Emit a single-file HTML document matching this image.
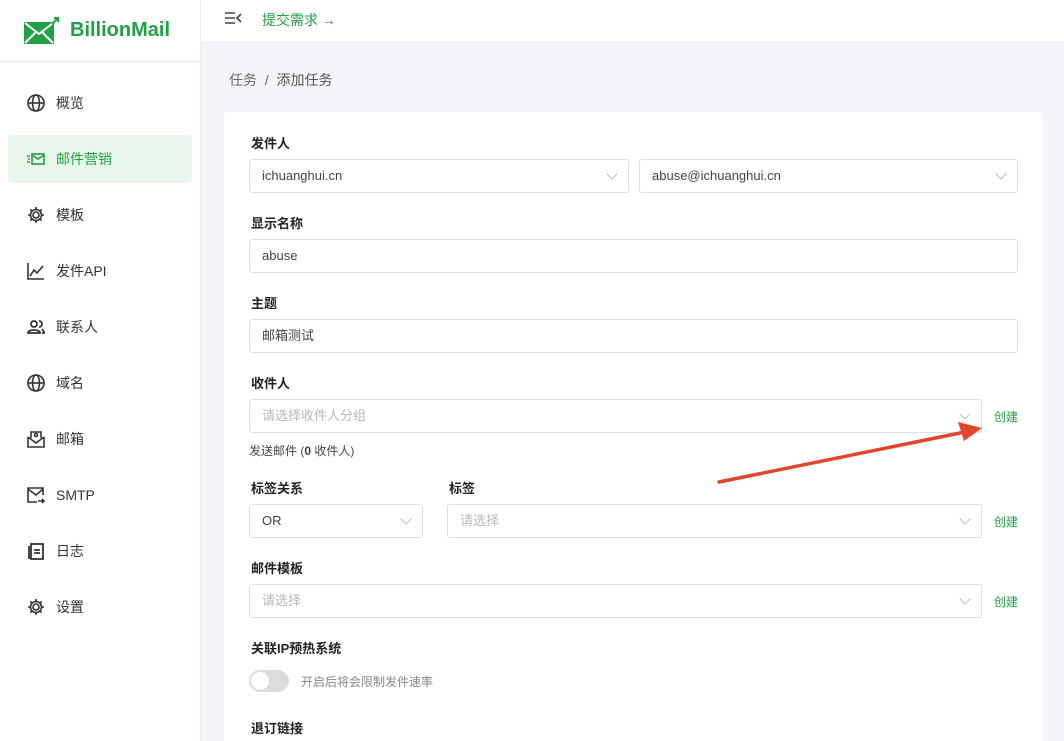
<!DOCTYPE html>
<html><head><meta charset="utf-8"><style>
*{box-sizing:border-box;margin:0;padding:0}
html,body{width:1064px;height:741px;overflow:hidden}
body{background:#f3f5f8;font-family:"Liberation Sans","Noto Sans CJK SC",sans-serif;color:#333;position:relative}
.side{position:absolute;left:0;top:0;width:201px;height:741px;background:#fff;border-right:1px solid #eceef1}
.logo{height:62px;border-bottom:1px solid #e6e8eb;display:flex;align-items:center;padding-left:24px}
.logo span{color:#22a045;font-weight:bold;font-size:20px;margin-left:10px}
.nav{position:absolute;left:8px;width:184px;height:48px;display:flex;align-items:center;padding-left:18px;font-size:14px;color:#333;border-radius:4px}
.nav svg{margin-right:10px}
.nav.act{background:#e9f6ec;color:#22a045}
.top{position:absolute;left:201px;top:0;right:0;height:43px;background:#fff;border-bottom:1px solid #e8eaed}
.crumb{position:absolute;left:229px;top:70px;font-size:14px;color:#666}
.card{position:absolute;left:224px;top:112px;width:818px;height:640px;background:#fff;border-radius:3px}
.lab{position:absolute;font-size:13px;font-weight:bold;color:#222}
.inp{position:absolute;height:34px;border:1px solid #dcdfe4;border-radius:3px;font-size:13px;color:#444;padding-left:12px;line-height:32px;background:#fff}
.inp.ph{color:#b5b8bd}
.chev{position:absolute;right:12px;top:10px;width:8px;height:8px;border-right:1px solid #bbb;border-bottom:1px solid #bbb;transform:rotate(45deg)}
.cr{position:absolute;font-size:12px;color:#22a045}
</style></head><body>
<div class="side">
 <div class="logo"><svg width="36" height="28" viewBox="0 0 36 28"><rect x="0" y="5" width="30" height="22" fill="#22a045"/><path d="M1 6 L15 17 L29 6 M1 26 L12 15 M29 26 L18 15" stroke="#fff" stroke-width="2" fill="none"/><path d="M28 7 L34 1 M30 1 H34 V5" stroke="#22a045" stroke-width="2" fill="none"/></svg><span>BillionMail</span></div>
</div>
<div class="nav" style="top:79px"><svg width="20" height="20" viewBox="0 0 20 20" fill="none" stroke="#333" stroke-width="1.6"><circle cx="10" cy="10" r="8"/><ellipse cx="10" cy="10" rx="3.5" ry="8"/><path d="M2 10h16"/></svg>概览</div>
<div class="nav act" style="top:135px"><svg width="20" height="20" viewBox="0 0 20 20" fill="none" stroke="#22a045" stroke-width="1.6"><rect x="6" y="5" width="12" height="10"/><path d="M6 6l6 4 6-4M1 7h3M2 10h2M1 13h3"/></svg>邮件营销</div>
<div class="nav" style="top:191px"><svg width="20" height="20" viewBox="0 0 20 20" fill="none" stroke="#333" stroke-width="1.6"><circle cx="10" cy="10" r="3"/><path d="M10 2v3M10 15v3M2 10h3M15 10h3M4.3 4.3l2 2M13.7 13.7l2 2M4.3 15.7l2-2M13.7 6.3l2-2"/><circle cx="10" cy="10" r="5.5"/></svg>模板</div>
<div class="nav" style="top:247px"><svg width="20" height="20" viewBox="0 0 20 20" fill="none" stroke="#333" stroke-width="1.6"><path d="M2 2v16h16M4 15l4-6 3 3 6-7"/></svg>发件API</div>
<div class="nav" style="top:303px"><svg width="20" height="20" viewBox="0 0 20 20" fill="none" stroke="#333" stroke-width="1.8"><circle cx="8" cy="7" r="3"/><path d="M2 16c0-4 12-4 12 0zM13 4a3 3 0 010 6M16 16h2c0-2-1-3-2-4"/></svg>联系人</div>
<div class="nav" style="top:359px"><svg width="20" height="20" viewBox="0 0 20 20" fill="none" stroke="#333" stroke-width="1.6"><circle cx="10" cy="10" r="8"/><ellipse cx="10" cy="10" rx="3.5" ry="8"/><path d="M2 10h16"/></svg>域名</div>
<div class="nav" style="top:415px"><svg width="20" height="20" viewBox="0 0 20 20" fill="none" stroke="#333" stroke-width="1.6"><path d="M2 8v10h16V8M2 8l8 6 8-6M5 9V3h10v6"/><circle cx="10" cy="6" r="1.5"/></svg>邮箱</div>
<div class="nav" style="top:471px"><svg width="20" height="20" viewBox="0 0 20 20" fill="none" stroke="#333" stroke-width="1.6"><path d="M17 10V3H2v14h9M2 4l8 6 7-6M12 16h6M16 14l2 2-2 2"/></svg>SMTP</div>
<div class="nav" style="top:527px"><svg width="20" height="20" viewBox="0 0 20 20" fill="none" stroke="#333" stroke-width="1.8"><rect x="5" y="3" width="12" height="15"/><path d="M3 5v13M8 9h6M8 12h6"/></svg>日志</div>
<div class="nav" style="top:583px"><svg width="20" height="20" viewBox="0 0 20 20" fill="none" stroke="#333" stroke-width="1.6"><circle cx="10" cy="10" r="3"/><path d="M10 2v3M10 15v3M2 10h3M15 10h3M4.3 4.3l2 2M13.7 13.7l2 2M4.3 15.7l2-2M13.7 6.3l2-2"/><circle cx="10" cy="10" r="5.5"/></svg>设置</div>
<div class="top">
 <svg style="position:absolute;left:23px;top:11px" width="18" height="14" viewBox="0 0 18 14" fill="none" stroke="#444" stroke-width="1.6"><path d="M1 2h10M1 7h10M1 12h10M17 3l-4 4 4 4"/></svg>
 <div style="position:absolute;left:61px;top:10px;font-size:14px;color:#22a045">提交需求 →</div>
</div>
<div class="crumb">任务 &nbsp;/&nbsp; <span style="color:#555">添加任务</span></div>
<div class="card"></div>
<div class="lab" style="left:251px;top:133px">发件人</div>
<div class="inp" style="left:249px;top:159px;width:380px">ichuanghui.cn<div class="chev"></div></div>
<div class="inp" style="left:639px;top:159px;width:379px">abuse@ichuanghui.cn<div class="chev"></div></div>
<div class="lab" style="left:251px;top:213px">显示名称</div>
<div class="inp" style="left:249px;top:239px;width:769px">abuse</div>
<div class="lab" style="left:251px;top:293px">主题</div>
<div class="inp" style="left:249px;top:319px;width:769px">邮箱测试</div>
<div class="lab" style="left:251px;top:373px">收件人</div>
<div class="inp ph" style="left:249px;top:399px;width:733px">请选择收件人分组<div class="chev"></div></div>
<div class="cr" style="left:994px;top:408px">创建</div>
<div style="position:absolute;left:249px;top:442px;font-size:12px;color:#444">发送邮件 (<b>0</b> 收件人)</div>
<div class="lab" style="left:251px;top:478px">标签关系</div>
<div class="lab" style="left:449px;top:478px">标签</div>
<div class="inp" style="left:249px;top:504px;width:174px">OR<div class="chev"></div></div>
<div class="inp ph" style="left:447px;top:504px;width:535px">请选择<div class="chev"></div></div>
<div class="cr" style="left:994px;top:513px">创建</div>
<div class="lab" style="left:251px;top:558px">邮件模板</div>
<div class="inp ph" style="left:249px;top:584px;width:733px">请选择<div class="chev"></div></div>
<div class="cr" style="left:994px;top:593px">创建</div>
<div class="lab" style="left:251px;top:638px">关联IP预热系统</div>
<div style="position:absolute;left:249px;top:670px;width:40px;height:22px;border-radius:11px;background:#dcdcdc"><div style="position:absolute;left:2px;top:2px;width:18px;height:18px;border-radius:50%;background:#fff"></div></div>
<div style="position:absolute;left:301px;top:673px;font-size:12px;color:#888">开启后将会限制发件速率</div>
<div class="lab" style="left:251px;top:718px">退订链接</div>
<svg style="position:absolute;left:0;top:0" width="1064" height="741"><path d="M719 482 L965 432" stroke="#e2452b" stroke-width="3.5" stroke-linecap="round"/><path d="M982 428 L958 422 L964 441Z" fill="#e2452b"/></svg>
</body></html>
